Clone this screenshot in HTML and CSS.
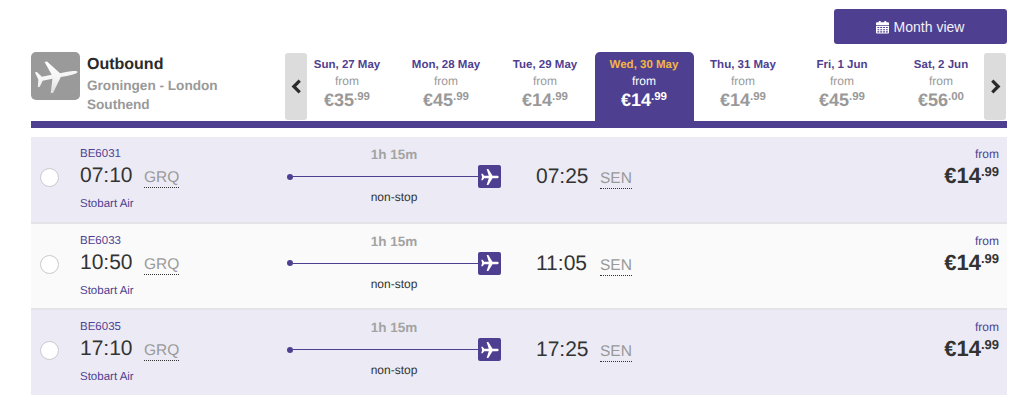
FILE: index.html
```html
<!DOCTYPE html>
<html lang="en">
<head>
<meta charset="utf-8">
<title>Outbound flights</title>
<link rel="stylesheet" href="styles.css">
</head>
<body>
<main class="page">
  <div class="toolbar">
    <button class="month-btn" type="button">
      <svg class="cal" viewBox="0 0 14 14" aria-hidden="true"><path fill="#fff" d="M0 3a1 1 0 0 1 1-1h2V.5h2V2h4V.5h2V2h2a1 1 0 0 1 1 1v2H0zM0 6h14v7a1 1 0 0 1-1 1H1a1 1 0 0 1-1-1zm1.5 1v1.2h2V7zm3 0v1.2h2.2V7zm3.2 0v1.2h2V7zm3 0v1.2h2V7zm-9.200 2.400v1.200h2V9.400zm3 0v1.200h2.200V9.400zm3.200 0v1.200h2V9.400zm3 0v1.200h2V9.400zm-9.200 2.300v1.100h2v-1.100zm3 0v1.100h2.200v-1.100zm3.200 0v1.100h2v-1.100zm3 0v1.100h2v-1.100z" fill-rule="evenodd"/></svg>
      Month view
    </button>
  </div>

  <header class="head">
    <div class="summary">
      <div class="badge">
        <svg viewBox="0 0 48 48" aria-hidden="true"><defs><linearGradient id="sheen" x1="0" y1="0" x2="1" y2="0"><stop offset="0" stop-color="#fff"/><stop offset=".6" stop-color="#f4f4f4"/><stop offset="1" stop-color="#dedede"/></linearGradient></defs><path fill="url(#sheen)" transform="rotate(79 24 24)" d="M24 2C25.600 2 26 8 26 12V19.500L40 30V32.500L26 28V38L31.500 42V44L24 42 16.500 44V42L22 38V28L8 32.500V30L22 19.500V12C22 8 22.400 2 24 2Z"/></svg>
      </div>
      <div class="route-name">
        <h1>Outbound</h1>
        <p>Groningen - London Southend</p>
      </div>
    </div>
    <nav class="dates">
      <button class="arrow arrow-prev" type="button" aria-label="Previous"><svg viewBox="0 0 10 14" aria-hidden="true"><path d="M8 1.500 2.500 7 8 12.500" fill="none" stroke="#2b2b2b" stroke-width="3"/></svg></button>
      <div class="tab"><b class="day">Sun, 27 May</b><span class="lbl">from</span><span class="amt">€35<sup>.99</sup></span></div>
      <div class="tab"><b class="day">Mon, 28 May</b><span class="lbl">from</span><span class="amt">€45<sup>.99</sup></span></div>
      <div class="tab"><b class="day">Tue, 29 May</b><span class="lbl">from</span><span class="amt">€14<sup>.99</sup></span></div>
      <div class="tab active"><b class="day">Wed, 30 May</b><span class="lbl">from</span><span class="amt">€14<sup>.99</sup></span></div>
      <div class="tab"><b class="day">Thu, 31 May</b><span class="lbl">from</span><span class="amt">€14<sup>.99</sup></span></div>
      <div class="tab"><b class="day">Fri, 1 Jun</b><span class="lbl">from</span><span class="amt">€45<sup>.99</sup></span></div>
      <div class="tab"><b class="day">Sat, 2 Jun</b><span class="lbl">from</span><span class="amt">€56<sup>.00</sup></span></div>
      <button class="arrow arrow-next" type="button" aria-label="Next"><svg viewBox="0 0 10 14" aria-hidden="true"><path d="M2 1.500 7.500 7 2 12.500" fill="none" stroke="#2b2b2b" stroke-width="3"/></svg></button>
    </nav>
  </header>
  <div class="rule"></div>

  <section class="flights">
    <article class="flight">
      <span class="radio"></span>
      <div class="dep">
        <div class="code">BE6031</div>
        <div class="when"><span class="time">07:10</span><abbr class="port">GRQ</abbr></div>
        <div class="airline">Stobart Air</div>
      </div>
      <div class="leg">
        <div class="dur">1h 15m</div>
        <div class="track"><i class="dot"></i><i class="line"></i><span class="plane"><svg viewBox="0 0 24 24" aria-hidden="true"><path fill="#fff" transform="rotate(90 12 12)" d="M21.500 16v-2L13.500 9V3.500C13.500 2.600 12.800 1.500 12 1.500s-1.500 1.100-1.500 2V9l-8 5v2l8-2.500V19l-2.500 1.800V22.500l4-1 4 1v-1.700L13.500 19v-5.500z"/></svg></span></div>
        <div class="stops">non-stop</div>
      </div>
      <div class="arr"><span class="time">07:25</span><abbr class="port">SEN</abbr></div>
      <div class="fare"><span class="lbl">from</span><span class="amt">€14<sup>.99</sup></span></div>
    </article>
    <article class="flight">
      <span class="radio"></span>
      <div class="dep">
        <div class="code">BE6033</div>
        <div class="when"><span class="time">10:50</span><abbr class="port">GRQ</abbr></div>
        <div class="airline">Stobart Air</div>
      </div>
      <div class="leg">
        <div class="dur">1h 15m</div>
        <div class="track"><i class="dot"></i><i class="line"></i><span class="plane"><svg viewBox="0 0 24 24" aria-hidden="true"><path fill="#fff" transform="rotate(90 12 12)" d="M21.500 16v-2L13.500 9V3.500C13.500 2.600 12.800 1.500 12 1.500s-1.500 1.100-1.500 2V9l-8 5v2l8-2.500V19l-2.500 1.800V22.500l4-1 4 1v-1.700L13.500 19v-5.500z"/></svg></span></div>
        <div class="stops">non-stop</div>
      </div>
      <div class="arr"><span class="time">11:05</span><abbr class="port">SEN</abbr></div>
      <div class="fare"><span class="lbl">from</span><span class="amt">€14<sup>.99</sup></span></div>
    </article>
    <article class="flight">
      <span class="radio"></span>
      <div class="dep">
        <div class="code">BE6035</div>
        <div class="when"><span class="time">17:10</span><abbr class="port">GRQ</abbr></div>
        <div class="airline">Stobart Air</div>
      </div>
      <div class="leg">
        <div class="dur">1h 15m</div>
        <div class="track"><i class="dot"></i><i class="line"></i><span class="plane"><svg viewBox="0 0 24 24" aria-hidden="true"><path fill="#fff" transform="rotate(90 12 12)" d="M21.500 16v-2L13.500 9V3.500C13.500 2.600 12.800 1.500 12 1.500s-1.500 1.100-1.500 2V9l-8 5v2l8-2.500V19l-2.500 1.800V22.500l4-1 4 1v-1.700L13.500 19v-5.500z"/></svg></span></div>
        <div class="stops">non-stop</div>
      </div>
      <div class="arr"><span class="time">17:25</span><abbr class="port">SEN</abbr></div>
      <div class="fare"><span class="lbl">from</span><span class="amt">€14<sup>.99</sup></span></div>
    </article>
  </section>
</main>
</body>
</html>
```
FILE: styles.css
```css
* { box-sizing: border-box; }
html, body { margin: 0; background: #fff; }
body { font-family: "Liberation Sans", Arial, sans-serif; color: #333; overflow: hidden; height: 414px; text-rendering: geometricPrecision; }

.page { margin: 0 17px 0 31px; padding-top: 9px; }

.toolbar { display: flex; justify-content: flex-end; }
.month-btn {
  width: 173px; height: 35px; border: 0; border-radius: 3px;
  background: #4f3f91; color: #f2f1f8;
  font: 14px "Liberation Sans", Arial, sans-serif;
  display: flex; align-items: center; justify-content: center; gap: 5px;
  padding: 0 1px 0 0;
}
.cal { width: 13px; height: 14px; }

.head { display: flex; margin-top: 8px; height: 69px; }
.summary { width: 254px; display: flex; gap: 7px; }
.badge { width: 49px; height: 48px; border-radius: 5px; background: #9a9a9a; display: flex; align-items: center; justify-content: center; }
.badge svg { width: 48px; height: 48px; }
.route-name h1 { margin: 3px 0 0; font-size: 16px; line-height: 20px; color: #2a2a2a; }
.route-name p { margin: 1px 0 0; width: 150px; font-size: 13.600px; line-height: 19px; font-weight: bold; color: #999; }

.dates { position: relative; flex: 1; display: flex; padding-left: 12.500px; }
.arrow { position: absolute; top: 1px; width: 22px; height: 67px; border: 0; border-radius: 3px; background: #dcdcdc; padding: 0; display: flex; align-items: center; justify-content: center; }
.arrow svg { width: 11px; height: 15px; }
.arrow-prev { left: 0; }
.arrow-next { right: 1px; }

.tab { width: 99px; display: flex; flex-direction: column; align-items: center; padding-top: 6px; border-radius: 5px 5px 0 0; }
.day { font-size: 11.500px; line-height: 15px; color: #4f3f91; }
.tab .lbl { font-size: 12px; line-height: 17px; color: #999; }
.tab .amt { font-size: 18px; font-weight: bold; line-height: 20px; color: #999; }
.tab sup { font-size: 11.500px; line-height: 0; vertical-align: 6px; }
.active { background: #4f3f91; }
.active .day { color: #f3b544; }
.active .lbl, .active .amt { color: #fff; }

.rule { height: 7px; background: #4f3f91; }

.flights { margin-top: 9px; }
.flight { height: 86.500px; display: flex; background: #ecebf5; border-bottom: 2px solid #e4e4e8; }
.flight:nth-child(even) { background: #fafafa; }
.flight:last-child { height: 84.500px; border-bottom: 0; }

.radio { width: 19px; height: 19px; margin: 31px 0 0 9px; border-radius: 50%; background: #fff; border: 1px solid #c9c9cf; flex: none; }

.dep { width: 207px; margin-left: 21px; flex: none; padding-top: 10px; }
.code, .airline { font-size: 11.500px; line-height: 14px; color: #4f3f91; }
.when { display: flex; align-items: baseline; height: 29px; line-height: 29px; margin-top: 0; }
.airline { margin-top: 7px; }
.time { font-size: 21px; color: #333; min-width: 53px; }
.port { font-size: 15.500px; color: #999; margin-left: 11px; line-height: 18px; border-bottom: 1px dotted #333; }

.leg { width: 214px; flex: none; display: flex; flex-direction: column; align-items: center; padding-top: 10px; }
.dur { font-size: 13.500px; line-height: 16px; font-weight: bold; color: #a3a3a3; }
.track { width: 100%; height: 23px; margin-top: 2px; display: flex; align-items: center; }
.dot { width: 6px; height: 6px; border-radius: 50%; background: #4f3f91; flex: none; }
.line { flex: 1; height: 1px; background: #4f3f91; }
.plane { width: 23px; height: 23px; border-radius: 2px; background: #4f3f91; display: flex; align-items: center; justify-content: center; flex: none; }
.plane svg { width: 20px; height: 20px; }
.stops { font-size: 12px; line-height: 14px; margin-top: 2px; color: #333; }

.arr { margin-left: 35px; padding-top: 25px; display: flex; align-items: baseline; height: 54px; line-height: 29px; flex: none; }

.fare { margin-left: auto; padding: 9px 8px 0 0; display: flex; flex-direction: column; align-items: flex-end; }
.fare .lbl { font-size: 12px; line-height: 16px; color: #4f3f91; }
.fare .amt { font-size: 22px; font-weight: bold; line-height: 28px; color: #333; }
.fare sup { font-size: 13px; line-height: 0; vertical-align: 7px; }
```
